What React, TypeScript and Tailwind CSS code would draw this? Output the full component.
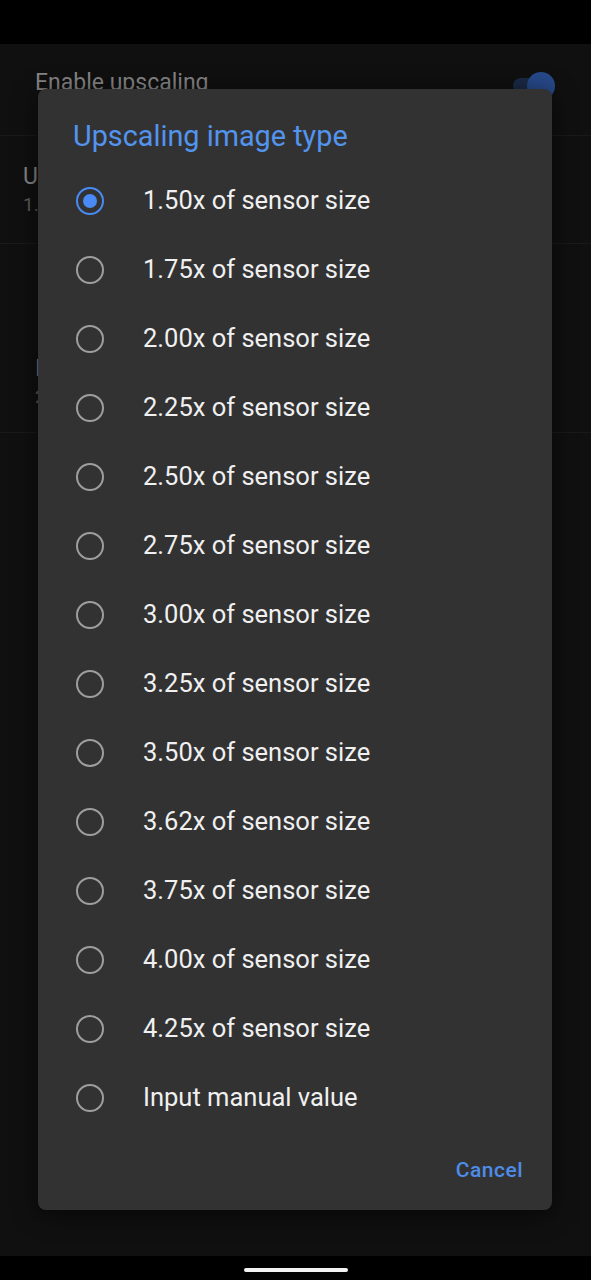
import React, { useState } from "react";

const OPTIONS = [
  "1.50x of sensor size",
  "1.75x of sensor size",
  "2.00x of sensor size",
  "2.25x of sensor size",
  "2.50x of sensor size",
  "2.75x of sensor size",
  "3.00x of sensor size",
  "3.25x of sensor size",
  "3.50x of sensor size",
  "3.62x of sensor size",
  "3.75x of sensor size",
  "4.00x of sensor size",
  "4.25x of sensor size",
  "Input manual value",
];

const Radio: React.FC<{ checked: boolean }> = ({ checked }) => (
  <div
    className={`w-[28px] h-[28px] rounded-full border-[2.5px] flex items-center justify-center ${
      checked ? "border-[#4a8af4]" : "border-[#9e9e9e]"
    }`}
  >
    {checked && <div className="w-[14px] h-[14px] rounded-full bg-[#4a8af4]" />}
  </div>
);

export default function App() {
  const [selected, setSelected] = useState(0);

  return (
    <div
      className="relative w-[591px] h-[1280px] bg-black overflow-hidden"
      style={{ fontFamily: "Roboto, 'Noto Sans', sans-serif" }}
    >
      {/* status bar */}
      <div className="h-[44px] bg-black" />

      {/* settings screen behind the dim */}
      <div className="h-[1212px] bg-[#101010] flex flex-col">
        <div className="h-[92px] flex items-start justify-between pt-[24px] pl-[35px] pr-[44px] border-b border-[#1a1a1a]">
          <span className="text-[23px] leading-[30px] text-[#858585]">Enable upscaling</span>
          <div className="relative mt-[10px] w-[34px] h-[16px] rounded-full bg-[#1b2a45]">
            <div className="absolute -right-[8px] -top-[6px] w-[28px] h-[28px] rounded-full bg-[#27498a]" />
          </div>
        </div>
        <div className="h-[108px] flex flex-col justify-center pl-[23px] border-b border-[#1a1a1a]">
          <span className="text-[23px] leading-[30px] text-[#858585]">Upscaling image type</span>
          <span className="text-[19px] leading-[26px] text-[#5e5e5e]">1.50x of sensor size</span>
        </div>
        <div className="h-[189px] flex flex-col justify-end pb-[22px] pl-[35px] border-b border-[#1a1a1a]">
          <span className="text-[23px] leading-[30px] text-[#858585]">Input resolution</span>
          <span className="text-[19px] leading-[26px] text-[#5e5e5e]">2</span>
        </div>
      </div>

      {/* navigation bar */}
      <div className="h-[24px] bg-black flex justify-center pt-[12px]">
        <div className="w-[104px] h-[4px] rounded-full bg-[#f2f2f2]" />
      </div>

      {/* dialog */}
      <div className="absolute left-[38px] top-[89px] w-[514px] h-[1121px] rounded-[8px] bg-[#323232] shadow-[0_4px_24px_rgba(0,0,0,0.6)] flex flex-col">
        <div className="pt-[30px] pl-[35px] h-[63px]">
          <h2 className="text-[28.8px] leading-[34px] text-[#5394ee]">Upscaling image type</h2>
        </div>
        <div className="mt-[14px] flex flex-col">
          {OPTIONS.map((o, i) => (
            <div
              key={o}
              onClick={() => setSelected(i)}
              className="h-[69px] flex items-center pl-[38px] cursor-pointer"
            >
              <Radio checked={selected === i} />
              <span className="ml-[39px] text-[25.5px] text-[#f0f0f0]">{o}</span>
            </div>
          ))}
        </div>
        <div className="mt-auto pb-[19px] pr-[29px] flex justify-end">
          <button className="h-[40px] text-[21px] font-medium tracking-[0.5px] text-[#4d8ce8]">Cancel</button>
        </div>
      </div>
    </div>
  );
}
